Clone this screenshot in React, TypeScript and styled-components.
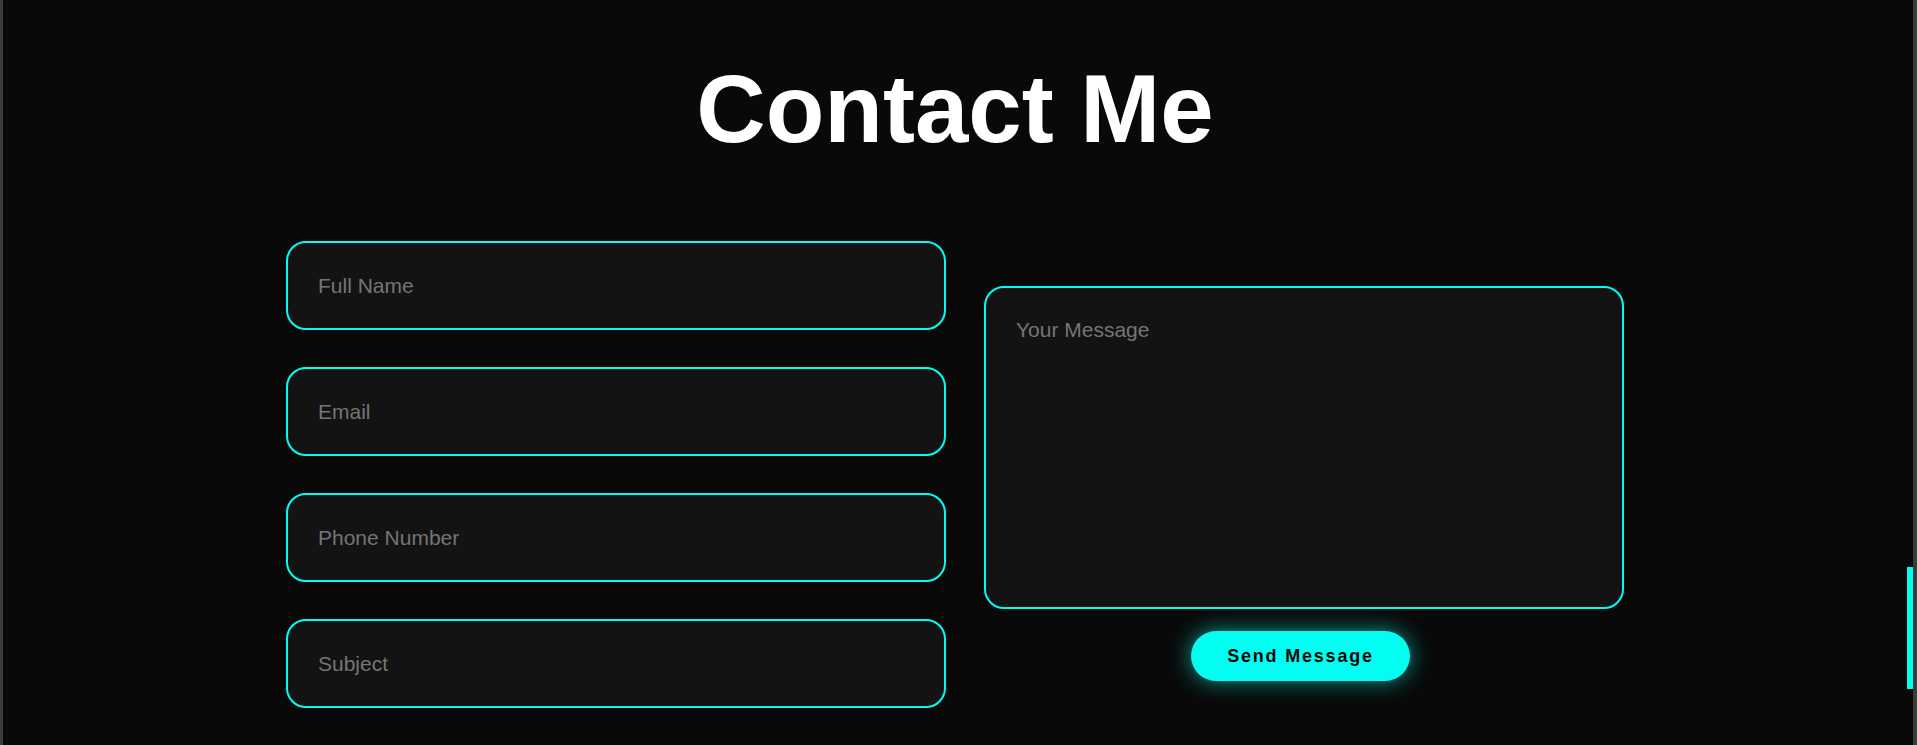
import React from "react";
import styled, { createGlobalStyle } from "styled-components";

const CYAN = "#00fff0";

const GlobalStyle = createGlobalStyle`
  html, body {
    margin: 0;
    padding: 0;
    background: #090909;
    overflow: hidden;
    font-family: "Liberation Sans", Arial, sans-serif;
  }
  * { box-sizing: border-box; }
`;

const Frame = styled.div`
  display: flex;
  height: 100vh;
  width: 100vw;
  background: #090909;
`;

const Edge = styled.div<{ $w: number }>`
  width: ${(p) => p.$w}px;
  flex: 0 0 ${(p) => p.$w}px;
  background: #3b3b3b;
`;

const Main = styled.main`
  flex: 1;
  display: flex;
  flex-direction: column;
  align-items: center;
  padding-top: 51px;
`;

const ScrollTrack = styled.div`
  position: relative;
  width: 6px;
  flex: 0 0 6px;
`;

const ScrollThumb = styled.div`
  position: absolute;
  left: 0;
  top: 567px;
  width: 6px;
  height: 122px;
  background: ${CYAN};
`;

const Title = styled.h1`
  margin: 0;
  font-size: 96px;
  line-height: 1.2;
  font-weight: 700;
  color: #ffffff;
`;

const Form = styled.form`
  margin-top: 75px;
  display: grid;
  grid-template-columns: 660px 640px;
  column-gap: 38px;
  align-items: start;
`;

const LeftColumn = styled.div`
  display: flex;
  flex-direction: column;
  gap: 37px;
`;

const RightColumn = styled.div`
  display: flex;
  flex-direction: column;
  gap: 22px;
  margin-top: 45px;
`;

const fieldBase = `
  width: 100%;
  background: #131313;
  border: 2px solid ${CYAN};
  border-radius: 20px;
  color: #dddddd;
  font-family: "Liberation Sans", Arial, sans-serif;
  font-size: 21px;
  outline: none;
  &::placeholder { color: #757575; opacity: 1; }
`;

const Input = styled.input`
  ${fieldBase}
  height: 89px;
  padding: 0 30px;
`;

const TextArea = styled.textarea`
  ${fieldBase}
  height: 323px;
  padding: 30px;
  resize: none;
  display: block;
  line-height: normal;
`;

const ButtonRow = styled.div`
  display: flex;
  justify-content: center;
  padding-right: 7px;
`;

const SendButton = styled.button`
  width: 219px;
  height: 50px;
  border: none;
  border-radius: 25px;
  background: ${CYAN};
  color: #050505;
  font-family: "Liberation Sans", Arial, sans-serif;
  font-weight: 700;
  font-size: 18px;
  letter-spacing: 1.8px;
  cursor: pointer;
  box-shadow: 0 0 22px rgba(0, 255, 240, 0.6);
`;

export default function App() {
  return (
    <>
      <GlobalStyle />
      <Frame>
        <Edge $w={3} />
        <Main>
          <Title>Contact Me</Title>
          <Form onSubmit={(e) => e.preventDefault()}>
            <LeftColumn>
              <Input type="text" placeholder="Full Name" />
              <Input type="email" placeholder="Email" />
              <Input type="tel" placeholder="Phone Number" />
              <Input type="text" placeholder="Subject" />
            </LeftColumn>
            <RightColumn>
              <TextArea placeholder="Your Message" />
              <ButtonRow>
                <SendButton type="submit">Send Message</SendButton>
              </ButtonRow>
            </RightColumn>
          </Form>
        </Main>
        <ScrollTrack>
          <ScrollThumb />
        </ScrollTrack>
        <Edge $w={4} />
      </Frame>
    </>
  );
}
